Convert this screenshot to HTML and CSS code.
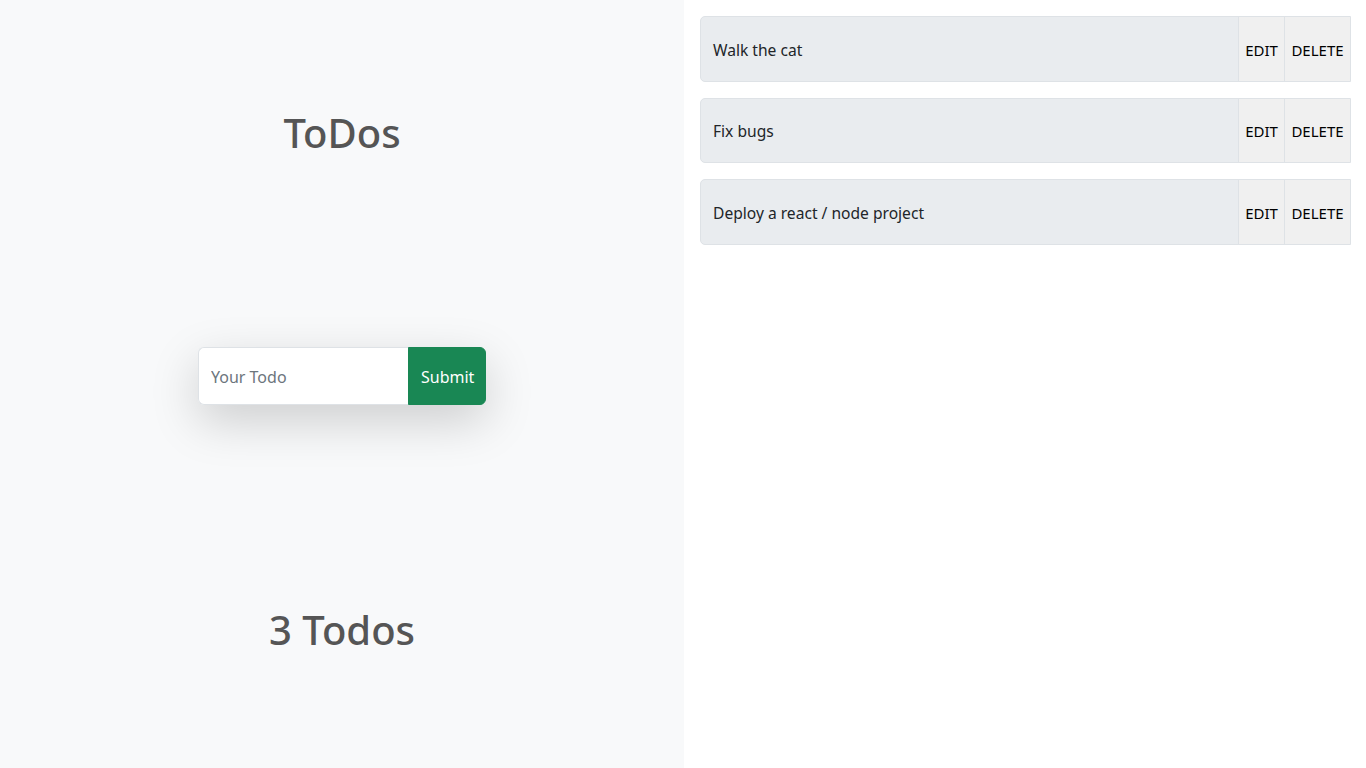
FILE: index.html
```html
<!DOCTYPE html>
<html lang="en">
<head>
<meta charset="utf-8">
<title>ToDos</title>
<link rel="stylesheet" href="styles.css">
</head>
<body>
<div class="app">
  <section class="left">
    <h1 class="title">ToDos</h1>
    <form class="todo-form">
      <input class="todo-input" type="text" placeholder="Your Todo">
      <button class="submit-btn" type="button">Submit</button>
    </form>
    <h1 class="count">3 Todos</h1>
  </section>
  <section class="right">
    <ul class="list">
      <li class="item">
        <span class="item-text">Walk the cat</span>
        <button class="item-btn edit" type="button">EDIT</button>
        <button class="item-btn delete" type="button">DELETE</button>
      </li>
      <li class="item">
        <span class="item-text">Fix bugs</span>
        <button class="item-btn edit" type="button">EDIT</button>
        <button class="item-btn delete" type="button">DELETE</button>
      </li>
      <li class="item">
        <span class="item-text">Deploy a react / node project</span>
        <button class="item-btn edit" type="button">EDIT</button>
        <button class="item-btn delete" type="button">DELETE</button>
      </li>
    </ul>
  </section>
</div>
</body>
</html>
```
FILE: styles.css
```css
* { box-sizing: border-box; }
html, body {
  margin: 0;
  padding: 0;
  height: 100%;
}
body {
  font-family: "Noto Sans", "Open Sans", "DejaVu Sans", sans-serif;
  font-size: 16px;
  line-height: 1.5;
  color: #212529;
  background: #fff;
}
.app {
  display: flex;
  height: 768px;
}
.left {
  width: 684px;
  background: #f8f9fa;
  display: flex;
  flex-direction: column;
  align-items: center;
  padding-top: 109px;
}
.title, .count {
  margin: 0;
  font-size: 40px;
  font-weight: 500;
  line-height: 48px;
  color: #555;
}
.todo-form {
  display: flex;
  margin-top: 190px;
  box-shadow: 0 1rem 3rem rgba(0, 0, 0, 0.175);
  border-radius: 6px;
}
.todo-input {
  width: 210px;
  height: 58px;
  padding: 17px 12px 15px;
  font: inherit;
  color: #212529;
  background: #fff;
  border: 1px solid #dee2e6;
  border-right: none;
  border-radius: 6px 0 0 6px;
  outline: none;
}
.todo-input::placeholder { color: #6c757d; }
.submit-btn {
  width: 78px;
  height: 58px;
  padding: 2px 12px 0;
  font: inherit;
  color: #fff;
  background: #198754;
  border: 1px solid #198754;
  border-radius: 0 6px 6px 0;
}
.count { margin-top: 201px; }
.right {
  flex: 1;
  padding: 16px 15px 0 16px;
}
.list {
  list-style: none;
  margin: 0;
  padding: 0;
  display: flex;
  flex-direction: column;
  gap: 16px;
}
.item {
  display: flex;
  align-items: stretch;
  height: 65.5px;
  background: #e9ecef;
  border: 1px solid #dee2e6;
  border-radius: 5px 0 0 5px;
}
.item-text {
  flex: 1;
  display: flex;
  align-items: center;
  padding: 3px 12px 0;
  font-size: 15.6px;
}
.item-btn {
  font: inherit;
  font-size: 15px;
  color: #000;
  background: #f0f0f0;
  border: none;
  border-left: 1px solid #dee2e6;
  padding: 2px 6px 0;
}
.edit { width: 46px; }
.delete { width: 66px; }
```
